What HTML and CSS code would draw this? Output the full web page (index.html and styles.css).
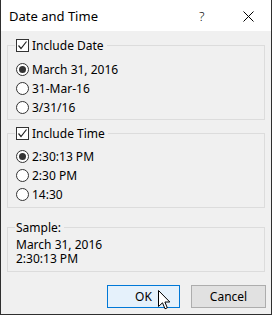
FILE: index.html
```html
<!DOCTYPE html>
<html>
<head>
  <meta charset="UTF-8">
  <title>Date and Time</title>
  <link rel="stylesheet" href="styles.css">
</head>
<body>
  <div class="window">
    <div class="titlebar">
      <span class="title">Date and Time</span>
      <span class="help">?</span>
      <span class="close">
        <svg width="11" height="11" viewBox="0 0 11 11"><path d="M0.5 0.5 L10.5 10.5 M10.5 0.5 L0.5 10.5" stroke="#000" stroke-width="1" fill="none"/></svg>
      </span>
    </div>

    <div class="content">
      <fieldset class="group group-date">
        <legend class="check-row">
          <span class="check"><svg width="11" height="11" viewBox="0 0 11 11"><path d="M1.5 5.5 L4 8.5 L9.5 1.5" stroke="#222" stroke-width="1.2" fill="none"/></svg></span>
          Include Date
        </legend>
        <div class="radio-row"><span class="radio on"></span>March 31, 2016</div>
        <div class="radio-row"><span class="radio"></span>31-Mar-16</div>
        <div class="radio-row"><span class="radio"></span>3/31/16</div>
      </fieldset>

      <fieldset class="group group-time">
        <legend class="check-row">
          <span class="check"><svg width="11" height="11" viewBox="0 0 11 11"><path d="M1.5 5.5 L4 8.5 L9.5 1.5" stroke="#222" stroke-width="1.2" fill="none"/></svg></span>
          Include Time
        </legend>
        <div class="radio-row"><span class="radio on"></span>2:30:13 PM</div>
        <div class="radio-row"><span class="radio"></span>2:30 PM</div>
        <div class="radio-row"><span class="radio"></span>14:30</div>
      </fieldset>

      <fieldset class="group group-sample">
        <legend class="plain-legend">Sample:</legend>
        <div class="sample-text">March 31, 2016<br>2:30:13 PM</div>
      </fieldset>

      <div class="buttons">
        <button class="btn btn-ok">OK</button>
        <button class="btn btn-cancel">Cancel</button>
      </div>
    </div>

    <svg class="cursor" width="13" height="21" viewBox="0 0 13 21">
      <path d="M0.5 0.5 L0.5 16.5 L4.5 12.8 L7 18.8 L9.3 17.8 L6.9 12 L11.8 12 Z" fill="#fff" stroke="#000" stroke-width="1" stroke-linejoin="miter"/>
    </svg>
  </div>
</body>
</html>
```

FILE: styles.css
```css
body {
  margin: 0;
  font-family: "Noto Sans", "Open Sans", sans-serif;
  font-size: 12px;
  color: #000;
}

.window {
  position: relative;
  width: 272px;
  height: 315px;
  box-sizing: border-box;
  border: 1px solid #2f2f2f;
  border-top: none;
  background-color: #f0f0f0;
  display: flex;
  flex-direction: column;
}

.titlebar {
  height: 31px;
  background-color: #fff;
  display: flex;
  align-items: center;
  font-size: 13px;
}

.title {
  padding-left: 8px;
  flex: 1;
}

.help {
  width: 8px;
  margin-right: 36px;
  font-size: 13px;
  font-weight: 300;
}

.close {
  display: flex;
  margin-right: 17px;
  margin-top: 1px;
}

.content {
  padding: 0 6px;
}

.group {
  margin: 0;
  border: 1px solid #dcdcdc;
  padding: 0 8px 0 7px;
}

.group legend {
  height: 17px;
  padding: 0 3px 0 1px;
  box-sizing: border-box;
}

.group-date {
  margin-top: 6px;
  padding-top: 6px;
  padding-bottom: 2px;
}

.group-time {
  margin-top: 5px;
  padding-top: 5px;
  padding-bottom: 3px;
}

.group-sample {
  margin-top: 11px;
  padding-top: 2px;
  padding-bottom: 5px;
}

.check-row {
  display: flex;
  align-items: center;
}

.plain-legend {
  line-height: 17px;
}

.check {
  width: 13px;
  height: 13px;
  box-sizing: border-box;
  border: 1px solid #333;
  background-color: #fff;
  margin-right: 3px;
  display: flex;
  align-items: center;
  justify-content: center;
}

.radio-row {
  height: 19px;
  display: flex;
  align-items: center;
  padding-left: 1px;
}

.radio {
  width: 13px;
  height: 13px;
  box-sizing: border-box;
  border: 1px solid #333;
  border-radius: 50%;
  background-color: #fff;
  margin-right: 3px;
  display: flex;
  align-items: center;
  justify-content: center;
}

.radio.on::after {
  content: "";
  width: 7px;
  height: 7px;
  border-radius: 50%;
  background-color: #333;
}

.sample-text {
  line-height: 14px;
  padding-left: 1px;
}

.buttons {
  display: flex;
  justify-content: flex-end;
  margin-top: 13px;
  margin-right: -1px;
  gap: 11px;
}

.btn {
  height: 23px;
  font-family: inherit;
  font-size: 12px;
  color: #000;
  padding: 0;
  box-sizing: border-box;
}

.btn-ok {
  width: 73px;
  background-color: #e5f1fb;
  border: 1px solid #0078d7;
}

.btn-cancel {
  width: 75px;
  background-color: #e1e1e1;
  border: 1px solid #adadad;
}

.cursor {
  position: absolute;
  left: 157px;
  top: 290px;
}
```
